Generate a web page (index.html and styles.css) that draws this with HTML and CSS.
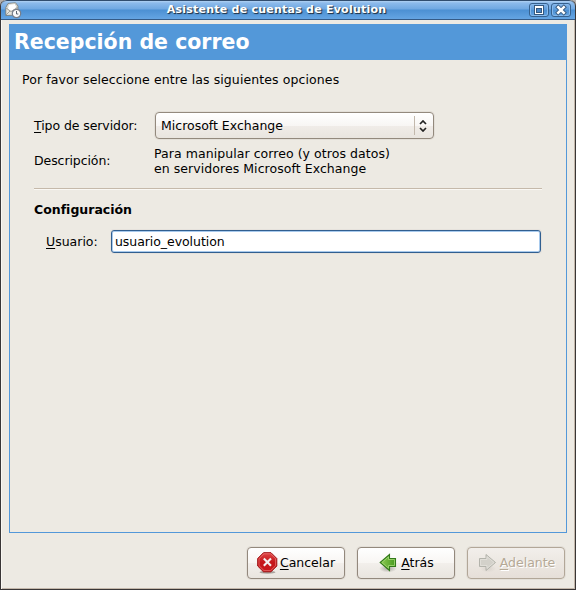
FILE: index.html
```html
<!DOCTYPE html>
<html lang="es">
<head>
<meta charset="utf-8">
<title>Asistente de cuentas de Evolution</title>
<link rel="stylesheet" href="styles.css">
</head>
<body>
<div class="window">
  <header class="titlebar">
    <svg class="app-icon" width="17" height="17" viewBox="0 0 17 17">
      <path d="M.8 5.500 3 1.500 10.500.8 13 4 12.500 13 .8 13.500Z" fill="#e4e4de" stroke="#777870" stroke-width=".8"/>
      <path d="M3.500 2.300 10 1.500 11.500 4.500 10.500 8 6 9.500 2.500 7Z" fill="#fff" stroke="#b8b8b0" stroke-width=".6"/>
      <path d="M1 6 6 9.500 12.500 5.500M1 13 5 9" fill="none" stroke="#92928a" stroke-width=".8"/>
      <circle cx="11.500" cy="11.500" r="4.200" fill="#fafafa" stroke="#777e8b" stroke-width="1.200"/>
      <path d="M11.500 9v3h1.800" fill="none" stroke="#5d6470"/>
    </svg>
    <h1 class="title">Asistente de cuentas de Evolution</h1>
    <div class="controls">
      <button class="control" aria-label="Maximizar"><svg width="18" height="12" viewBox="0 0 18 12"><path d="M4 1h10v10H4z" fill="#36597f"/><path d="M5 2h8v8H5z" fill="#fff"/><path d="M6 4h6v5H6z" fill="#36597f"/><path d="M7 5h4v3H7z" fill="#4a87c7"/></svg></button>
      <button class="control" aria-label="Cerrar"><svg width="18" height="12" viewBox="0 0 18 12"><path d="m6.200 3.200 5.600 5.600m0-5.600-5.600 5.600" fill="none" stroke="#36597f" stroke-width="4.300" stroke-linecap="square"/><path d="m6.200 3.200 5.600 5.600m0-5.600-5.600 5.600" fill="none" stroke="#fff" stroke-width="2.500" stroke-linecap="square"/></svg></button>
    </div>
  </header>
  <main class="panel">
    <h2 class="heading">Recepción de correo</h2>
    <div class="content">
      <p class="intro">Por favor seleccione entre las siguientes opciones</p>
      <div class="server">
        <label class="type-label"><u>T</u>ipo de servidor:</label>
        <div class="combo">
          <span class="combo-text">Microsoft Exchange</span>
          <span class="combo-arrow"><svg width="8" height="12" viewBox="0 0 8 12"><path d="m1 4 3-3 3 3M1 8l3 3 3-3" fill="none" stroke="#222" stroke-width="1.700"/></svg></span>
        </div>
        <span class="desc-label">Descripción:</span>
        <p class="desc">Para manipular correo (y otros datos)<br>en servidores Microsoft Exchange</p>
      </div>
      <hr class="rule">
      <h3 class="section">Configuración</h3>
      <div class="user">
        <label class="user-label" for="user"><u>U</u>suario:</label>
        <input class="entry" id="user" value="usuario_evolution">
      </div>
    </div>
  </main>
  <footer class="actions">
    <button class="button">
      <svg width="21" height="22" viewBox="0 0 21 22">
        <defs><linearGradient id="red" x2="0" y2="1"><stop stop-color="#df4545"/><stop offset=".5" stop-color="#c4161a"/><stop offset="1" stop-color="#c9191c"/></linearGradient></defs>
        <ellipse cx="10.500" cy="20.300" rx="8" ry="1.500" fill="#77736d" opacity=".6"/>
        <path d="M6.500.700h7.500l5.800 5.800V14L14 19.800H6.500L.700 14V6.500Z" fill="url(#red)" stroke="#9e1013"/>
        <path d="M7 1.800h6.600l5 4.900v7l-5 4.900H7l-5-4.900v-7Z" fill="none" stroke="#ec7a78" stroke-width=".7"/>
        <path d="m6.800 6.600 7.200 7.200M14 6.600l-7.200 7.200" stroke="#f4f1f0" stroke-width="2.100"/>
      </svg>
      <span class="button-text cancel"><u>C</u>ancelar</span>
    </button>
    <button class="button">
      <svg width="21" height="22" viewBox="0 0 21 22">
        <defs><linearGradient id="green"><stop stop-color="#91cc55"/><stop offset="1" stop-color="#45991e"/></linearGradient><radialGradient id="shade"><stop stop-color="#77736d" stop-opacity=".6"/><stop offset="1" stop-color="#77736d" stop-opacity="0"/></radialGradient></defs>
        <ellipse cx="10" cy="16.500" rx="9" ry="4" fill="url(#shade)"/>
        <path d="M2.200 10.500 11.500 2.500v4h6v8h-6v4Z" fill="url(#green)" stroke="#32791a" stroke-width="1.100"/>
        <path d="m3.900 10.500 6.600-5.700v2.700h6v6h-6v2.700Z" fill="none" stroke="#a5d977" stroke-width=".8"/>
      </svg>
      <span class="button-text back"><u>A</u>trás</span>
    </button>
    <button class="button disabled" disabled>
      <svg width="21" height="22" viewBox="0 0 21 22">
        <ellipse cx="11" cy="16.500" rx="8" ry="4" fill="url(#shade)" opacity=".25"/>
        <path d="M18.500 10.500 9 2.500v4H2.500v8H9v4Z" fill="#d3d1ca" stroke="#b3b3ab"/>
        <path d="m17 10.500-7-5.900v2.900H3.500v6H10v2.900Z" fill="none" stroke="#e3e1dc" stroke-width=".8"/>
      </svg>
      <span class="button-text next"><u>A</u>delante</span>
    </button>
  </footer>
</div>
</body>
</html>
```

FILE: styles.css
```css
* { box-sizing: border-box; }
body {
  margin: 0;
  background: #b5afab;
  font: 12.500px/15px "DejaVu Sans", sans-serif;
  color: #000;
}
h1, h2, h3, p { margin: 0; font-size: inherit; }
u {
  text-decoration: underline;
  text-decoration-thickness: 1px;
  text-underline-offset: 2px;
  text-decoration-skip-ink: none;
}
button { margin: 0; padding: 0; font: inherit; color: inherit; }
svg { display: block; flex: none; }

.window {
  display: flex;
  flex-direction: column;
  width: 576px;
  height: 590px;
  border: 1px solid #393636;
  border-top: 0;
  border-radius: 6px 6px 0 0;
  background: #edeae3;
  box-shadow: inset 1px 0 #faf8f3, inset -1px -1px #c3b7aa;
  overflow: hidden;
}
.titlebar {
  display: flex;
  flex: none;
  align-items: center;
  height: 20px;
  padding: 0 4px;
  border-top: 1px solid #314d6e;
  border-bottom: 1px solid #355b87;
  border-radius: 6px 6px 0 0;
  background: linear-gradient(#b1d2f3 0, #8cbaeb 2px, #70a8e2 8px, #4c90d3 9px, #65a5e3 18px);
}
.app-icon { margin-top: 1px; }
.title {
  flex: 1;
  padding-left: 2px;
  text-align: center;
  font-size: 11px;
  line-height: 18px;
  letter-spacing: .24px;
  color: #fff;
  text-shadow: 1px 1px 1px #23364a, 1px 1px #23364a99;
}
.controls { display: flex; gap: 2px; }
.control {
  width: 20px;
  height: 14px;
  border: 1px solid #36618e;
  border-radius: 3px;
  background: linear-gradient(#84b5e9, #5a9ada 50%, #4c8fd2 51%, #64a5e3);
  box-shadow: inset 0 0 0 1px #87b9ec;
}

.panel {
  flex: none;
  height: 509px;
  margin: 4px 8px 0;
  border: 1px solid #5398d9;
}
.heading {
  height: 35px;
  padding-left: 4px;
  background: #5398d9;
  color: #fff;
  font-size: 20.500px;
  line-height: 34px;
}
.content { padding: 12px 24px 0 12px; }
.intro { height: 40px; letter-spacing: .1px; }
.server {
  display: grid;
  grid-template-columns: 108px 279px;
  grid-template-rows: 27px 30px;
  column-gap: 13px;
  row-gap: 7px;
  align-items: center;
  margin-left: 12px;
}
.type-label, .desc-label { letter-spacing: -.08px; }
.combo {
  display: flex;
  align-items: center;
  height: 27px;
  padding: 0 6px 0 5px;
  border: 1px solid #93897d;
  border-radius: 4px;
  background: linear-gradient(#fff, #f8f6f4 50%, #f0ece8 51%, #e9e5df);
  box-shadow: 0 0 0 1px #e3dfd8;
}
.combo-text { flex: 1; }
.combo-arrow {
  display: flex;
  align-items: center;
  height: 19px;
  padding-left: 4px;
  border-left: 1px solid #c2b8ac;
}
.desc { margin-left: -1px; letter-spacing: .06px; }
.desc-label { padding-bottom: 1px; }
.rule {
  width: 508px;
  height: 2px;
  margin: 12px 0 12px 12px;
  border: 0;
  border-top: 1px solid #c5b9aa;
  background: #faf8f4;
}
.section { margin-left: 12px; }
.user {
  display: flex;
  align-items: center;
  margin: 13px 0 0 24px;
}
.user-label { width: 65px; }
.entry {
  width: 430px;
  height: 23px;
  padding: 0 3px;
  border: 1px solid #315f90;
  border-radius: 3px;
  outline: 0;
  background: #fff;
  box-shadow: inset 0 0 0 1px #a8caed, 0 0 0 1px #e6e2dc;
  font: inherit;
  color: inherit;
  letter-spacing: -.06px;
}
.actions {
  display: flex;
  justify-content: flex-end;
  gap: 12px;
  margin: 14px 10px 0 0;
}
.button {
  display: flex;
  align-items: center;
  justify-content: center;
  gap: 2px;
  width: 98px;
  height: 32px;
  border: 1px solid #93897d;
  border-radius: 4px;
  background: linear-gradient(#fff, #f8f6f3 50%, #f2efeb 51%, #e9e5df);
  box-shadow: 0 0 0 1px #e3dfd8;
}
.button-text { padding-bottom: 2px; }
.button.disabled {
  border-color: #b2a798;
  background: linear-gradient(#f2efeb, #e6dfd8);
  color: #b5a996;
  text-shadow: 1px 1px #fff;
}
```
